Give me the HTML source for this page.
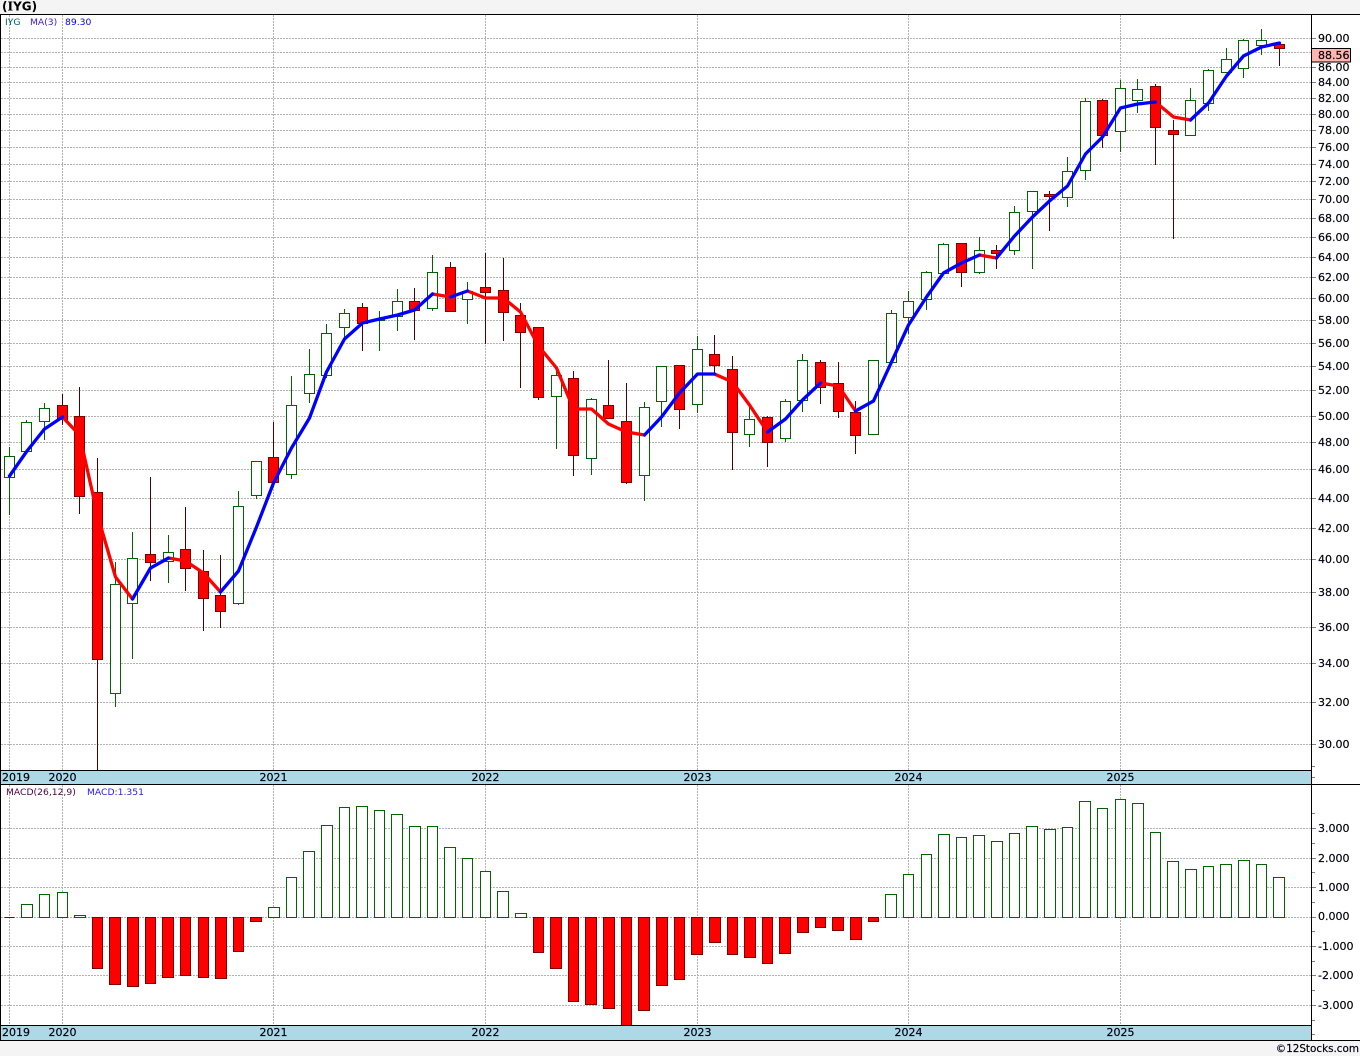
<!DOCTYPE html>
<html><head><meta charset="utf-8"><title>IYG</title>
<style>html,body{margin:0;padding:0;background:#f4f4f4}svg{display:block}text{font-family:"DejaVu Sans",sans-serif;fill:#000}.ax text{stroke:#00002a;stroke-width:.18}</style></head>
<body>
<svg width="1360" height="1056" viewBox="0 0 1360 1056" xmlns="http://www.w3.org/2000/svg">
<rect width="1360" height="1056" fill="#f4f4f4"/>
<rect x="0" y="14" width="1360" height="1027" fill="#fff"/>
<rect x="0" y="770" width="1311" height="14" fill="#add8e6"/>
<rect x="0" y="1025" width="1311" height="15" fill="#add8e6"/>
<g shape-rendering="crispEdges" fill="none">
<path stroke="#b2b2b2" stroke-dasharray="2 1" d="M1 38.5H1311M1 52.5H1311M1 67.5H1311M1 82.5H1311M1 98.5H1311M1 114.5H1311M1 130.5H1311M1 147.5H1311M1 164.5H1311M1 181.5H1311M1 199.5H1311M1 218.5H1311M1 237.5H1311M1 257.5H1311M1 277.5H1311M1 298.5H1311M1 320.5H1311M1 343.5H1311M1 366.5H1311M1 390.5H1311M1 416.5H1311M1 442.5H1311M1 469.5H1311M1 498.5H1311M1 528.5H1311M1 559.5H1311M1 592.5H1311M1 627.5H1311M1 663.5H1311M1 702.5H1311M1 744.5H1311M1 828.5H1311M1 858.5H1311M1 887.5H1311M1 917.5H1311M1 946.5H1311M1 975.5H1311M1 1005.5H1311"/>
<path stroke="#b2b2b2" stroke-dasharray="2 1" d="M9.5 15V770M62.5 15V770M273.5 15V770M485.5 15V770M697.5 15V770M908.5 15V770M1120.5 15V770M9.5 785V1025M62.5 785V1025M273.5 785V1025M485.5 785V1025M697.5 785V1025M908.5 785V1025M1120.5 785V1025"/>
<!-- green wicks -->
<path stroke="#006400" d="M9.5 447V515M26.5 420V451M44.5 403V440M115.5 562V707M132.5 532V659M168.5 535V583M238.5 491V605M256.5 461V499M291.5 376V479M309.5 349V403M326.5 324V378M344.5 309V339M379.5 311V351M397.5 289V331M432.5 255V311M467.5 282V324M556.5 370V449M591.5 398V475M644.5 402V501M661.5 366V427M697.5 336V413M749.5 407V447M785.5 399V442M802.5 354V412M873.5 360V435M891.5 310V362M908.5 291V334M926.5 271V310M943.5 243V273M979.5 237V274M1014.5 206V255M1032.5 191V269M1067.5 157V207M1085.5 98V180M1120.5 80V152M1137.5 79V113M1190.5 88V136M1208.5 69V111M1226.5 48V72M1243.5 39V78M1261.5 29V55"/>
<!-- red wicks -->
<path stroke="#4f0000" d="M62.5 394V425M79.5 387V514M97.5 458V770M150.5 477V581M185.5 507V591M203.5 550V631M220.5 555V628M273.5 422V482M362.5 303V351M414.5 288V340M450.5 262V311M485.5 253V344M503.5 258V341M520.5 303V388M538.5 327V400M573.5 371V476M608.5 360V418M626.5 383V484M679.5 365V429M714.5 335V373M732.5 356V470M767.5 416V467M820.5 360V404M838.5 362V418M855.5 401V454M961.5 243V287M996.5 245V269M1049.5 191V231M1102.5 99V148M1155.5 84V165M1173.5 120V239M1279.5 44V66"/>
<!-- green bodies -->
<path stroke="#006400" fill="#fff" d="M4.5 456.5h10v21h-10zM21.5 422.5h10v29h-10zM39.5 408.5h10v13h-10zM110.5 584.5h10v109h-10zM127.5 558.5h10v45h-10zM163.5 552.5h10v9h-10zM233.5 506.5h10v97h-10zM251.5 461.5h10v34h-10zM286.5 405.5h10v69h-10zM304.5 374.5h10v19h-10zM321.5 333.5h10v42h-10zM339.5 313.5h10v14h-10zM374.5 319.5h10v1h-10zM392.5 301.5h10v15h-10zM427.5 272.5h10v36h-10zM462.5 291.5h10v8h-10zM551.5 375.5h10v21h-10zM586.5 399.5h10v59h-10zM639.5 407.5h10v68h-10zM656.5 366.5h10v35h-10zM692.5 349.5h10v55h-10zM744.5 419.5h10v15h-10zM780.5 401.5h10v37h-10zM797.5 360.5h10v40h-10zM868.5 360.5h10v74h-10zM886.5 313.5h10v49h-10zM903.5 301.5h10v16h-10zM921.5 272.5h10v27h-10zM938.5 244.5h10v29h-10zM974.5 250.5h10v22h-10zM1009.5 212.5h10v38h-10zM1027.5 191.5h10v20h-10zM1062.5 171.5h10v26h-10zM1080.5 101.5h10v69h-10zM1115.5 88.5h10v43h-10zM1132.5 89.5h10v11h-10zM1185.5 100.5h10v35h-10zM1203.5 70.5h10v33h-10zM1221.5 59.5h10v13h-10zM1238.5 40.5h10v28h-10zM1256.5 40.5h10v5h-10z"/>
<!-- red bodies -->
<path stroke="#800000" fill="#f00" d="M57.5 405.5h10v14h-10zM74.5 416.5h10v80h-10zM92.5 492.5h10v167h-10zM145.5 554.5h10v8h-10zM180.5 549.5h10v19h-10zM198.5 571.5h10v27h-10zM215.5 595.5h10v16h-10zM268.5 457.5h10v25h-10zM357.5 307.5h10v16h-10zM409.5 301.5h10v9h-10zM445.5 267.5h10v44h-10zM480.5 287.5h10v5h-10zM498.5 290.5h10v22h-10zM515.5 315.5h10v17h-10zM533.5 327.5h10v70h-10zM568.5 378.5h10v77h-10zM603.5 405.5h10v13h-10zM621.5 421.5h10v61h-10zM674.5 365.5h10v44h-10zM709.5 354.5h10v11h-10zM727.5 369.5h10v63h-10zM762.5 417.5h10v25h-10zM815.5 362.5h10v25h-10zM833.5 383.5h10v28h-10zM850.5 412.5h10v23h-10zM956.5 243.5h10v29h-10zM991.5 250.5h10v3h-10zM1044.5 194.5h10v2h-10zM1097.5 100.5h10v35h-10zM1150.5 86.5h10v41h-10zM1168.5 130.5h10v4h-10zM1274.5 44.5h10v4h-10z"/>
<!-- MACD green -->
<path stroke="#006400" fill="#fff" d="M21.5 904.5h11V917.5h-11zM39.5 894.5h10V917.5h-10zM57.5 892.5h10V917.5h-10zM74.5 915.5h11V917.5h-11zM268.5 907.5h11V917.5h-11zM286.5 877.5h10V917.5h-10zM303.5 851.5h11V917.5h-11zM321.5 825.5h11V917.5h-11zM339.5 807.5h10V917.5h-10zM356.5 806.5h11V917.5h-11zM374.5 810.5h10V917.5h-10zM391.5 814.5h11V917.5h-11zM409.5 826.5h11V917.5h-11zM427.5 826.5h10V917.5h-10zM444.5 847.5h11V917.5h-11zM462.5 858.5h10V917.5h-10zM480.5 871.5h10V917.5h-10zM497.5 891.5h11V917.5h-11zM515.5 913.5h11V917.5h-11zM885.5 894.5h11V917.5h-11zM903.5 874.5h10V917.5h-10zM921.5 854.5h10V917.5h-10zM938.5 834.5h11V917.5h-11zM956.5 837.5h10V917.5h-10zM973.5 835.5h11V917.5h-11zM991.5 841.5h11V917.5h-11zM1009.5 833.5h10V917.5h-10zM1026.5 826.5h11V917.5h-11zM1044.5 829.5h11V917.5h-11zM1062.5 827.5h10V917.5h-10zM1079.5 801.5h11V917.5h-11zM1097.5 808.5h10V917.5h-10zM1115.5 799.5h10V917.5h-10zM1132.5 803.5h11V917.5h-11zM1150.5 832.5h10V917.5h-10zM1167.5 861.5h11V917.5h-11zM1185.5 869.5h11V917.5h-11zM1203.5 866.5h10V917.5h-10zM1220.5 864.5h11V917.5h-11zM1238.5 860.5h11V917.5h-11zM1256.5 864.5h10V917.5h-10zM1273.5 877.5h11V917.5h-11z"/>
<!-- MACD red -->
<path stroke="#800000" fill="#f00" d="M4.5 917.5h10V917.5h-10zM92.5 917.5h10V968.5h-10zM109.5 917.5h11V984.5h-11zM127.5 917.5h11V986.5h-11zM145.5 917.5h10V983.5h-10zM162.5 917.5h11V977.5h-11zM180.5 917.5h10V975.5h-10zM198.5 917.5h10V977.5h-10zM215.5 917.5h11V978.5h-11zM233.5 917.5h10V951.5h-10zM250.5 917.5h11V921.5h-11zM533.5 917.5h10V952.5h-10zM550.5 917.5h11V968.5h-11zM568.5 917.5h10V1001.5h-10zM585.5 917.5h11V1004.5h-11zM603.5 917.5h11V1008.5h-11zM621.5 917.5h10V1025.5h-10zM638.5 917.5h11V1010.5h-11zM656.5 917.5h11V985.5h-11zM674.5 917.5h10V979.5h-10zM691.5 917.5h11V954.5h-11zM709.5 917.5h11V942.5h-11zM727.5 917.5h10V954.5h-10zM744.5 917.5h11V957.5h-11zM762.5 917.5h10V963.5h-10zM779.5 917.5h11V953.5h-11zM797.5 917.5h11V932.5h-11zM815.5 917.5h10V927.5h-10zM832.5 917.5h11V930.5h-11zM850.5 917.5h11V939.5h-11zM868.5 917.5h10V921.5h-10z"/>
</g>
<g fill="none" stroke-width="3.3" stroke-linejoin="round" stroke-linecap="round">
<g stroke="#f00">
<polyline points="62.5,417 79.5,435 97.5,515 115.5,577 132.5,599"/>
<polyline points="168.5,558 185.5,561 203.5,573 220.5,592"/>
<polyline points="432.5,294 450.5,297"/>
<polyline points="467.5,291 485.5,298 503.5,298 520.5,312 538.5,346 556.5,368 573.5,409 591.5,409 608.5,424 626.5,432 644.5,435"/>
<polyline points="714.5,374 732.5,382 749.5,405 767.5,432"/>
<polyline points="820.5,383 838.5,386 855.5,411"/>
<polyline points="979.5,255 996.5,258"/>
<polyline points="1155.5,102 1173.5,117 1190.5,120"/>
</g>
<g stroke="#00f">
<polyline points="9.5,476 27,451 44.5,429 62.5,417"/>
<polyline points="132.5,599 150.5,568 168.5,558"/>
<polyline points="220.5,592 238.5,571 256.5,527 273.5,483 291.5,448 309.5,418 326.5,372 344.5,339 362.5,323 379.5,319 397.5,315 414.5,310 432.5,294"/>
<polyline points="450.5,297 467.5,291"/>
<polyline points="644.5,435 661.5,417 679.5,393 697.5,374 714.5,374"/>
<polyline points="767.5,432 785.5,419 802.5,400 820.5,383"/>
<polyline points="855.5,411 873.5,401 891.5,362 908.5,325 926.5,297 943.5,273 961.5,263 979.5,255"/>
<polyline points="996.5,258 1014.5,236 1032.5,217 1049.5,201 1067.5,186 1085.5,154 1102.5,137 1120.5,108 1137.5,104 1155.5,102"/>
<polyline points="1190.5,120 1208.5,103 1226.5,76 1243.5,56 1261.5,47 1279.5,43"/>
</g>
</g>
<g shape-rendering="crispEdges" fill="none">
<path stroke="#808080" d="M1311 38.5h5M1311 52.5h5M1311 67.5h5M1311 82.5h5M1311 98.5h5M1311 114.5h5M1311 130.5h5M1311 147.5h5M1311 164.5h5M1311 181.5h5M1311 199.5h5M1311 218.5h5M1311 237.5h5M1311 257.5h5M1311 277.5h5M1311 298.5h5M1311 320.5h5M1311 343.5h5M1311 366.5h5M1311 390.5h5M1311 416.5h5M1311 442.5h5M1311 469.5h5M1311 498.5h5M1311 528.5h5M1311 559.5h5M1311 592.5h5M1311 627.5h5M1311 663.5h5M1311 702.5h5M1311 744.5h5M1311 766.5h4M1311 777.5h4M1311 813.5h4M1311 828.5h5M1311 843.5h4M1311 858.5h5M1311 872.5h4M1311 887.5h5M1311 902.5h4M1311 917.5h5M1311 931.5h4M1311 946.5h5M1311 961.5h4M1311 975.5h5M1311 990.5h4M1311 1005.5h5M1311 1020.5h4M1311 1034.5h4"/>
<path stroke="#000" d="M0 14.5H1360M0 784.5H1360M0 1040.5H1360M0 770.5H1311M0 1025.5H1311M0.5 14V1040M1311.5 14V1040"/>
<rect x="1311.5" y="48.5" width="39" height="13.5" fill="#ffb4ae" stroke="#000"/>
</g>
<text x="2" y="10.5" font-size="12" font-weight="bold">(<tspan style="font-family:'DejaVu Serif',serif">I</tspan>YG)</text>
<g class="ax">
<text x="5" y="25" font-size="9.2" style="fill:#006464;stroke:none">IYG</text>
<text x="30" y="25" font-size="9.2" style="fill:#3a18ee;stroke:none">MA(3)</text>
<text x="65" y="25" font-size="9.2" style="fill:#0000ff;stroke:none">89.30</text>
<text x="6" y="795" font-size="9.2" style="fill:#500040;stroke:none">MACD(26,12,9)</text>
<text x="87" y="795" font-size="9.2" style="fill:#2a20ee;stroke:none">MACD:1.351</text>
<g font-size="11">
<text x="1318" y="42">90.00</text><text x="1318" y="71">86.00</text><text x="1318" y="86">84.00</text><text x="1318" y="102">82.00</text><text x="1318" y="118">80.00</text><text x="1318" y="134">78.00</text><text x="1318" y="151">76.00</text><text x="1318" y="168">74.00</text><text x="1318" y="185">72.00</text><text x="1318" y="203">70.00</text><text x="1318" y="222">68.00</text><text x="1318" y="241">66.00</text><text x="1318" y="261">64.00</text><text x="1318" y="281">62.00</text><text x="1318" y="302">60.00</text><text x="1318" y="324">58.00</text><text x="1318" y="347">56.00</text><text x="1318" y="370">54.00</text><text x="1318" y="394">52.00</text><text x="1318" y="420">50.00</text><text x="1318" y="446">48.00</text><text x="1318" y="473">46.00</text><text x="1318" y="502">44.00</text><text x="1318" y="532">42.00</text><text x="1318" y="563">40.00</text><text x="1318" y="596">38.00</text><text x="1318" y="631">36.00</text><text x="1318" y="667">34.00</text><text x="1318" y="706">32.00</text><text x="1318" y="748">30.00</text>
<text x="1318" y="59">88.56</text>
<text x="1318" y="832">3.000</text><text x="1318" y="862">2.000</text><text x="1318" y="891">1.000</text><text x="1318" y="920">0.000</text><text x="1318" y="950">-1.000</text><text x="1318" y="979">-2.000</text><text x="1318" y="1009">-3.000</text>
<text x="2" y="781">2019</text><text x="62.5" y="781" text-anchor="middle">2020</text><text x="273.5" y="781" text-anchor="middle">2021</text><text x="485.5" y="781" text-anchor="middle">2022</text><text x="697.5" y="781" text-anchor="middle">2023</text><text x="908.5" y="781" text-anchor="middle">2024</text><text x="1120.5" y="781" text-anchor="middle">2025</text>
<text x="2" y="1036">2019</text><text x="62.5" y="1036" text-anchor="middle">2020</text><text x="273.5" y="1036" text-anchor="middle">2021</text><text x="485.5" y="1036" text-anchor="middle">2022</text><text x="697.5" y="1036" text-anchor="middle">2023</text><text x="908.5" y="1036" text-anchor="middle">2024</text><text x="1120.5" y="1036" text-anchor="middle">2025</text>
</g>
<text x="1359" y="1052" font-size="10.4" text-anchor="end">©12Stocks.com</text>
</g>
</svg>
</body></html>
